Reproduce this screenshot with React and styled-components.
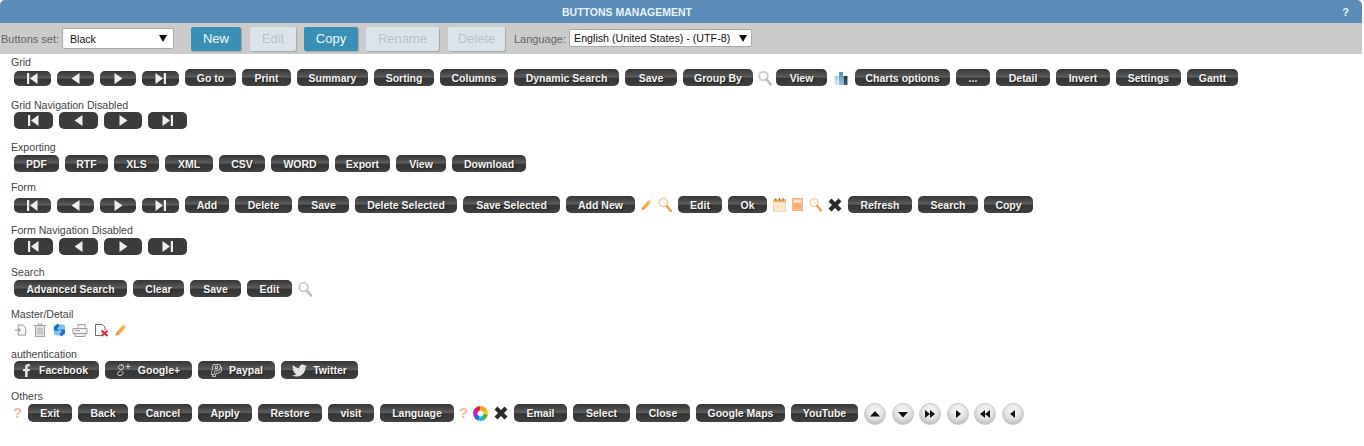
import React from 'react';
import styled, { createGlobalStyle } from 'styled-components';
import { FaFacebookF, FaTwitter } from 'react-icons/fa';
import { SlPaypal } from 'react-icons/sl';

const Global = createGlobalStyle`
  html, body { margin: 0; padding: 0; background: #fff; }
  body { font-family: "Liberation Sans", Arial, sans-serif; }
`;

const Page = styled.div`
  width: 1362px;
  height: 446px;
  overflow: hidden;
`;
const TitleBar = styled.div`
  height: 23px;
  background: #5a8cb7;
  border-radius: 5px 5px 0 0;
  display: flex;
  align-items: center;
  justify-content: space-between;
  padding: 0 13px 0 562px;
  color: #e6f3fb;
  font-size: 10.5px;
  font-weight: bold;
`;
const Title = styled.div``;
const Help = styled.div`
  font-size: 11px;
`;
const Toolbar = styled.div`
  height: 31px;
  background: #cbcbcb;
  display: flex;
  align-items: center;
  padding-left: 1px;
  color: #666;
`;
const Caption = styled.span`
  width: ${p => p.$w}px;
  flex: none;
  font-size: 11px;
`;
const FakeSelect = styled.div`
  box-sizing: border-box;
  width: ${p => p.$w}px;
  height: ${p => p.$h}px;
  background: #fff;
  border: 1px solid #a9a9a9;
  border-radius: 2px;
  display: flex;
  align-items: center;
  justify-content: space-between;
  padding: 0 ${p => p.$pr}px 0 ${p => p.$pl}px;
  font-size: ${p => p.$fs}px;
  white-space: nowrap;
  color: #111;
  margin-right: ${p => p.$after}px;
  align-self: ${p => p.$self || 'center'};
  margin-top: ${p => p.$mt || 0}px;
`;
const Arrow = styled.span`
  width: 0;
  height: 0;
  border-left: 4px solid transparent;
  border-right: 4px solid transparent;
  border-top: 7px solid #111;
`;
const ActionButton = styled.div`
  height: 24px;
  width: ${p => p.$w}px;
  margin-right: ${p => p.$after}px;
  border-radius: 2px;
  display: flex;
  align-items: center;
  justify-content: center;
  font-size: 13px;
  background: ${p => (p.$off ? '#dae4e9' : '#3a8fb5')};
  color: ${p => (p.$off ? '#b6c3ca' : '#f2f8fb')};
  box-shadow: 1px 1px 1px rgba(0, 0, 0, 0.18);
`;
const Section = styled.section`
  height: ${p => p.$h}px;
  padding-left: 11px;
  box-sizing: border-box;
`;
const Body = styled.div`
  padding-top: 2px;
`;
const Label = styled.div`
  height: ${p => p.$h}px;
  line-height: 13px;
  font-size: 10.6px;
  color: #444;
`;
const Row = styled.div`
  display: flex;
  align-items: flex-end;
  gap: 6px;
  padding-left: ${p => p.$pl ?? 3}px;
`;
const TopRow = styled(Row)`
  align-items: flex-start;
  gap: 0;
`;
const gloss = 'linear-gradient(#363636 0, #484848 25%, #5e5e5e 47%, #353535 54%, #3a3a3a 80%, #444 100%)';
const Btn = styled.div`
  box-sizing: border-box;
  height: ${p => p.$h || 17}px;
  width: ${p => p.$w}px;
  flex: none;
  border-radius: 5px;
  background: ${gloss};
  display: flex;
  align-items: center;
  justify-content: center;
  color: #f4f4f4;
  font-size: 10.5px;
  font-weight: bold;
  text-shadow: 1px 1px 1px #222;
`;
const NavBtn = styled(Btn)`
  height: ${p => (p.$flat ? 17 : 15)}px;
  background: ${p => (p.$flat ? '#3b3b3b' : gloss)};
`;
const SocialBtn = styled(Btn)`
  height: 18px;
  gap: 6px;
  padding-right: ${p => p.$pr || 0}px;
`;
const SocialIcon = styled.span`
  display: flex;
  font-size: ${p => p.$s}px;
  color: #e4e4e4;
`;
const IconSlot = styled.span`
  display: flex;
  flex: none;
  align-self: center;
  width: ${p => p.$w}px;
  height: 16px;
  align-items: center;
  justify-content: center;
`;
const Qmark = styled.span`
  flex: none;
  width: ${p => p.$w}px;
  margin-left: ${p => p.$ml || 0}px;
  text-align: center;
  font-size: 15px;
  line-height: 16px;
  font-weight: bold;
  color: #f4b99a;
  align-self: center;
`;
const Wheel = styled.span`
  flex: none;
  align-self: center;
  width: 15px;
  height: 15px;
  border-radius: 50%;
  background:
    radial-gradient(circle, #fff 0 2.5px, transparent 3.5px),
    conic-gradient(#f6a623 0 60deg, #e8d020 60deg 100deg, #3fbf4a 100deg 150deg, #21b6e8 150deg 200deg, #3b5fe0 200deg 250deg, #b026c8 250deg 300deg, #e8203c 300deg 360deg);
`;
const RoundGroup = styled.div`
  display: flex;
  gap: 5.5px;
  margin: -1px 0 0 6px;
`;
const Round = styled.div`
  flex: none;
  box-sizing: border-box;
  width: 22px;
  height: 22px;
  border-radius: 50%;
  background: radial-gradient(circle at 50% 35%, #f8f8f8 0, #e6e6e6 45%, #bdbdbd 80%, #9c9c9c 100%);
  border: 1px solid #c9c9c9;
  display: flex;
  align-items: center;
  justify-content: center;
`;

const NavIcon = ({ d }) => (
  <svg width="13" height="11" viewBox="0 0 13 11" fill="#eee">
    <path d={d} />
  </svg>
);
const NAV = [
  'M1 0h2.2v11H1zM11.5 0v11L4 5.500z',
  'M10.500 0v11L2.500 5.500z',
  'M2.500 0v11l8-5.500z',
  'M9.800 0H12v11H9.800zM1.500 0v11L9 5.500z',
];
const NAV_W = [37, 37, 36, 37];
const DIS_W = [39, 39, 38, 39];

const NavSet = ({ flat }) => (
  <>
    {NAV.map((d, i) => (
      <NavBtn key={i} $flat={flat} $w={flat ? DIS_W[i] : NAV_W[i]}>
        <NavIcon d={d} />
      </NavBtn>
    ))}
  </>
);

const Glass = () => (
  <svg width="14" height="16" viewBox="0 0 14 15" fill="none" style={{ flex: 'none' }}>
    <circle cx="5.500" cy="5.500" r="4.300" stroke="#cfcfcf" strokeWidth="1.900" />
    <path d="M8.800 9l4 5" stroke="#bdbdbd" strokeWidth="2.600" strokeLinecap="round" />
  </svg>
);
const OrangeGlass = () => (
  <svg width="14" height="15" viewBox="0 0 14 15" fill="none">
    <circle cx="5.500" cy="5.500" r="4.300" stroke="#f5c9a2" strokeWidth="1.400" fill="#fff8f0" />
    <path d="M8.800 9l4 5" stroke="#e9a24c" strokeWidth="2.400" strokeLinecap="round" />
  </svg>
);
const Pencil = () => (
  <svg width="13" height="14" viewBox="0 0 13 14">
    <path d="M1 13l1-4 7-8 3 2.500-7 8z" fill="#f6b042" />
    <path d="M9 1l3 2.500-1.300 1.500-3-2.500z" fill="#f0d28a" />
    <path d="M1 13l1-4 3 2.500z" fill="#f3824a" />
  </svg>
);
const Chart = () => (
  <svg width="14" height="14" viewBox="0 0 14 14">
    <defs>
      <linearGradient id="barA" x1="0" y1="0" x2="0" y2="1"><stop offset="0" stopColor="#a9c6de" /><stop offset="1" stopColor="#e3e9ee" /></linearGradient>
      <linearGradient id="barB" x1="0" y1="0" x2="0" y2="1"><stop offset="0" stopColor="#3f8fd0" /><stop offset="1" stopColor="#a6c4da" /></linearGradient>
      <linearGradient id="barC" x1="0" y1="0" x2="0" y2="1"><stop offset="0" stopColor="#17384c" /><stop offset="1" stopColor="#47606f" /></linearGradient>
    </defs>
    <rect x="0.500" y="5" width="4" height="9" fill="url(#barA)" />
    <rect x="5" y="1" width="4" height="13" fill="url(#barB)" />
    <rect x="9.500" y="5" width="4" height="9" fill="url(#barC)" />
  </svg>
);
const Calendar = () => (
  <svg width="14" height="15" viewBox="0 0 14 15">
    <rect x="0.500" y="2" width="13" height="13" fill="#f6ead4" stroke="#e6d6ba" />
    <rect x="0.500" y="2" width="13" height="3" fill="#eeb060" />
    <path d="M3 0.500v3M7 0.500v3M11 0.500v3" stroke="#8b6a3a" />
    <rect x="4" y="8" width="6" height="4" fill="#fbe2b8" />
  </svg>
);
const Calc = () => (
  <svg width="11" height="13" viewBox="0 0 12 14">
    <rect x="0.500" y="0.500" width="11" height="13" fill="#f8c59a" stroke="#f2b27d" />
    <rect x="2" y="2.500" width="8" height="2" fill="#fdf0e2" />
    <rect x="2" y="6" width="8" height="6" fill="#f6ab72" />
  </svg>
);
const Cross = () => (
  <svg width="14" height="14" viewBox="0 0 14 14">
    <path d="M3.500.5L7 4 10.500.5l3 3L10 7l3.500 3.500-3 3L7 10l-3.500 3.500-3-3L4 7 .5 3.500z" fill="#2b2b2b" />
  </svg>
);
const DocIn = () => (
  <svg width="14" height="14" viewBox="0 0 14 14" fill="none" stroke="#8e8e8e">
    <path d="M4.500 4V1.500h5l3 3v8h-8V10" fill="#f6f6f6" />
    <path d="M1 7h5M4 4.500L6.500 7 4 9.500" strokeWidth="1.300" />
  </svg>
);
const Trash = () => (
  <svg width="14" height="14" viewBox="0 0 14 14" fill="#e2e2e2" stroke="#a5a5a5">
    <path d="M1 2.500h12M5 2.500v-1.500h4v1.500" />
    <path d="M2.500 2.500h9v11h-9zM5 5v6.500M7 5v6.500M9 5v6.500" />
  </svg>
);
const Refresh = () => (
  <svg width="14" height="14" viewBox="0 0 14 14">
    <rect x="1" y="1" width="12" height="12" rx="3" fill="#7cc0f0" />
    <path d="M1 4l4-4 2 2.500L4.500 5l2 2.500L1 7.500zM13 10l-4 4-2-2.500L9.500 9l-2-2.500 5.500 0z" fill="#1d6fc4" />
  </svg>
);
const FolderPrint = () => (
  <svg width="16" height="14" viewBox="0 0 16 14" fill="#f3f3f3" stroke="#9c9c9c">
    <path d="M6 4.500V1.500h7v3" />
    <path d="M1 5.500h14v5H1zM3 10.500v3h10v-3" />
    <path d="M3 7.500h5" />
  </svg>
);
const DocX = () => (
  <svg width="15" height="14" viewBox="0 0 15 14" fill="none">
    <path d="M7 12.500H1.500v-11h7l2.500 2.500v3" stroke="#6a6a6a" />
    <path d="M7.500 7.500l6 5.500M13.500 7.500l-6 5.500" stroke="#e0202c" strokeWidth="1.800" />
  </svg>
);
const GooglePlus = () => (
  <svg width="15" height="15" viewBox="0 0 15 15" fill="none" stroke="#e4e4e4" strokeWidth="0.900">
    <path d="M6.500 2H3.800C2.500 2 1.500 3 1.500 4.200s1 2.300 2.500 2.300 2.500-1 2.500-2.300S5.500 2 4.200 2" />
    <path d="M4.500 6.500C3 7.300 5.800 8 6 9.500c.2 1.800-1.500 3-3 3s-2.700-.8-2.700-2 1.400-2.200 3-2" />
    <path d="M11 1v5M8.500 3.500h5" />
  </svg>
);
const Tri = ({ d }) => (
  <svg width="14" height="12" viewBox="0 0 14 12" fill="#111">
    <path d={d} />
  </svg>
);

const Txt = ({ items }) => items.map(t => <Btn key={t[0]} $w={t[1]} $h={t[2]}>{t[0]}</Btn>);

export default function App() {
  return (
    <Page>
      <Global />
      <TitleBar>
        <Title>BUTTONS MANAGEMENT</Title>
        <Help>?</Help>
      </TitleBar>
      <Toolbar>
        <Caption $w={61}>Buttons set:</Caption>
        <FakeSelect $w={112} $h={21} $pl={7} $pr={6} $fs={10.6} $after={17}>Black<Arrow /></FakeSelect>
        <ActionButton $w={50} $after={9}>New</ActionButton>
        <ActionButton $w={46} $after={8} $off>Edit</ActionButton>
        <ActionButton $w={54} $after={8}>Copy</ActionButton>
        <ActionButton $w={73} $after={9} $off>Rename</ActionButton>
        <ActionButton $w={57} $after={9} $off>Delete</ActionButton>
        <Caption $w={55}>Language:</Caption>
        <FakeSelect $w={183} $h={18} $pl={4} $pr={4} $fs={10.7} $after={0} $self="flex-start" $mt={6}>English (United States) - (UTF-8)<Arrow /></FakeSelect>
      </Toolbar>
      <Body>
        <Section $h={43}>
          <Label $h={13}>Grid</Label>
          <Row>
            <NavSet />
            <Txt items={[['Go to', 51], ['Print', 49], ['Summary', 71], ['Sorting', 60], ['Columns', 68], ['Dynamic Search', 105], ['Save', 52], ['Group By', 70]]} />
            <IconSlot $w={11}><Glass /></IconSlot>
            <Btn $w={51}>View</Btn>
            <IconSlot $w={16}><Chart /></IconSlot>
            <Txt items={[['Charts options', 95], ['...', 34], ['Detail', 54], ['Invert', 54], ['Settings', 65], ['Gantt', 51]]} />
          </Row>
        </Section>
        <Section $h={42}>
          <Label $h={13}>Grid Navigation Disabled</Label>
          <Row><NavSet flat /></Row>
        </Section>
        <Section $h={40}>
          <Label $h={14}>Exporting</Label>
          <Row>
            <Txt items={[['PDF', 45], ['RTF', 43], ['XLS', 45], ['XML', 48], ['CSV', 46], ['WORD', 58], ['Export', 55], ['View', 50], ['Download', 74]]} />
          </Row>
        </Section>
        <Section $h={43}>
          <Label $h={15}>Form</Label>
          <Row>
            <NavSet />
            <Txt items={[['Add', 44], ['Delete', 57], ['Save', 51], ['Delete Selected', 102], ['Save Selected', 97], ['Add New', 69]]} />
            <IconSlot $w={11}><Pencil /></IconSlot>
            <IconSlot $w={14}><OrangeGlass /></IconSlot>
            <Txt items={[['Edit', 44], ['Ok', 39]]} />
            <IconSlot $w={13}><Calendar /></IconSlot>
            <IconSlot $w={11}><Calc /></IconSlot>
            <IconSlot $w={13}><OrangeGlass /></IconSlot>
            <IconSlot $w={14}><Cross /></IconSlot>
            <Txt items={[['Refresh', 64], ['Search', 60], ['Copy', 49]]} />
          </Row>
        </Section>
        <Section $h={42}>
          <Label $h={14}>Form Navigation Disabled</Label>
          <Row><NavSet flat /></Row>
        </Section>
        <Section $h={42}>
          <Label $h={14}>Search</Label>
          <Row>
            <Txt items={[['Advanced Search', 113], ['Clear', 51], ['Save', 51], ['Edit', 45]]} />
            <IconSlot $w={13}><Glass /></IconSlot>
          </Row>
        </Section>
        <Section $h={40}>
          <Label $h={14}>Master/Detail</Label>
          <Row>
            <IconSlot $w={13}><DocIn /></IconSlot>
            <IconSlot $w={14}><Trash /></IconSlot>
            <IconSlot $w={13}><Refresh /></IconSlot>
            <IconSlot $w={16}><FolderPrint /></IconSlot>
            <IconSlot $w={15}><DocX /></IconSlot>
            <IconSlot $w={12}><Pencil /></IconSlot>
          </Row>
        </Section>
        <Section $h={42}>
          <Label $h={13}>authentication</Label>
          <Row>
            <SocialBtn $w={85} $pr={5}><SocialIcon $s={13}><FaFacebookF /></SocialIcon>Facebook</SocialBtn>
            <SocialBtn $w={87}><GooglePlus />Google+</SocialBtn>
            <SocialBtn $w={77}><SocialIcon $s={13}><SlPaypal /></SocialIcon>Paypal</SocialBtn>
            <SocialBtn $w={77}><SocialIcon $s={15}><FaTwitter /></SocialIcon>Twitter</SocialBtn>
          </Row>
        </Section>
        <Section $h={50}>
          <Label $h={14}>Others</Label>
          <TopRow $pl={2}>
            <Row $pl={0}>
              <Qmark $w={9}>?</Qmark>
              <Txt items={[['Exit', 44, 18], ['Back', 50, 18], ['Cancel', 58, 18], ['Apply', 54, 18], ['Restore', 64, 18], ['visit', 46, 18], ['Language', 74, 18]]} />
              <Qmark $w={8} $ml={-1}>?</Qmark>
              <Wheel />
              <IconSlot $w={14}><Cross /></IconSlot>
              <Txt items={[['Email', 53, 18], ['Select', 57, 18], ['Close', 54, 18], ['Google Maps', 89, 18], ['YouTube', 67, 18]]} />
            </Row>
            <RoundGroup>
              <Round><Tri d="M7 3l5 5.500H2z" /></Round>
              <Round><Tri d="M2 4h10l-5 5.500z" /></Round>
              <Round><Tri d="M2 2v8l5-4zM7 2v8l5-4z" /></Round>
              <Round><Tri d="M5 2v8l5-4z" /></Round>
              <Round><Tri d="M12 2v8L7 6zM7 2v8L2 6z" /></Round>
              <Round><Tri d="M9 2v8L4 6z" /></Round>
            </RoundGroup>
          </TopRow>
        </Section>
      </Body>
    </Page>
  );
}
